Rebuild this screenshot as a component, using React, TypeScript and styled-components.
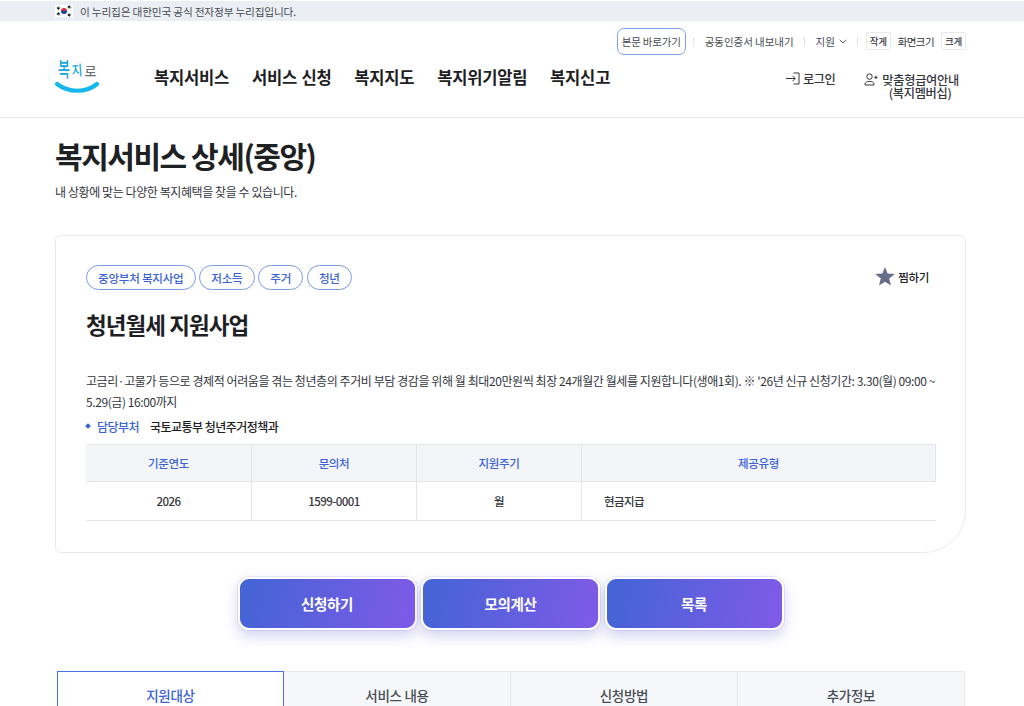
import React from 'react';
import styled, { createGlobalStyle } from 'styled-components';

const Global = createGlobalStyle`
  html, body { margin: 0; padding: 0; background: #fff; }
  body { font-family: "Noto Sans CJK KR", "Noto Sans", sans-serif; color: #1e2124; overflow: hidden; height: 706px; }
  * { box-sizing: border-box; }
`;
const Page = styled.div`width: 1024px; height: 706px; overflow: hidden;`;
const GovBar = styled.div`
  height: 20px; margin-top: 1px; background: #ebeef3; padding-left: 55px;
  display: flex; align-items: center; gap: 7px;
  font-size: 10.7px; letter-spacing: -0.2px; color: #464c53;
`;
const FlagBox = styled.svg`width: 18px; height: 12px; display: block;`;
const Header = styled.header`height: 97px; border-bottom: 1px solid #e6e8ea; padding: 0 58px 0 55px; display: flex; flex-direction: column;`;
const Utility = styled.div`height: 41px; display: flex; justify-content: flex-end; align-items: center; font-size: 10.5px; color: #464c53;`;
const Skip = styled.a`
  width: 69px; height: 27px; border: 1px solid #7f9ff0; border-radius: 7px;
  display: flex; align-items: center; justify-content: center; color: #464c53;
  letter-spacing: -0.2px;
`;
const Sep = styled.i<{ $l?: number; $r?: number }>`
  width: 1px; height: 9px; background: #dfe1e5;
  margin: 0 ${p => p.$r ?? 11}px 0 ${p => p.$l ?? 11}px;
`;
const UtilText = styled.span`display: inline-flex; align-items: center; gap: 4px; letter-spacing: -0.05px;`;
const SizeBtn = styled.button`
  width: 25px; height: 18px; padding: 0; background: #fff; border: 1px solid #e6e8ea; border-radius: 2px;
  font: inherit; font-size: 9.5px; font-weight: 500; color: #33363d; letter-spacing: -0.3px;
`;
const SizeLabel = styled.span`margin: 0 7px; font-size: 10.5px; color: #33363d; letter-spacing: -0.6px;`;
const MainRow = styled.div`display: flex; align-items: flex-start; height: 52px; margin-top: 4px;`;
const LogoBox = styled.div`width: 99px; height: 44px; margin-top: -9px; flex: none;`;
const LogoSvg = styled.svg`width: 48px; height: 44px; display: block; overflow: visible;`;
const LogoWord = styled.text`font-size: 13px; font-weight: 500; font-family: "Noto Sans CJK KR", sans-serif;`;
const Nav = styled.nav`display: flex; gap: 22.8px; font-size: 16.6px; font-weight: 700; color: #1e2124; letter-spacing: -0.25px; word-spacing: 1px; line-height: 24px; margin-top: -1px;`;
const Spacer = styled.div`flex: 1;`;
const LoginItem = styled.div`display: flex; align-items: center; gap: 3px; height: 24px; font-size: 12.2px; font-weight: 500; color: #33363d; letter-spacing: -0.45px; margin-right: 29px; margin-top: 1px;`;
const Member = styled.div`display: flex; flex-direction: column; align-items: center; font-size: 12.2px; font-weight: 500; color: #33363d; line-height: 12px; letter-spacing: -0.25px; margin-top: 8px; margin-right: 7px;`;
const MemberTop = styled.span`display: flex; align-items: center; gap: 4px; height: 12px;`;
const MemberSub = styled.span`margin: 1px 0 0 17px;`;
const Main = styled.main`padding: 0 58px 0 55px;`;
const Title = styled.h1`margin: 15px 0 0; font-size: 30px; font-weight: 700; line-height: 44px; letter-spacing: -1.45px; color: #1e2124;`;
const Sub = styled.p`margin: 5px 0 0; font-size: 12px; line-height: 20px; color: #33363d; letter-spacing: -0.42px;`;
const Card = styled.section`
  margin-top: 33px; height: 318px; border: 1px solid #e9eaec; border-radius: 6px 6px 42px 6px;
  padding: 29px 29px 0 30px; display: flex; flex-direction: column;
`;
const TopRow = styled.div`display: flex; align-items: center; justify-content: space-between; height: 25px;`;
const Tags = styled.div`display: flex; gap: 3.8px;`;
const Tag = styled.span`
  height: 25px; padding: 0 11px; border: 1px solid #7b9ae8; border-radius: 13px; display: flex; align-items: center;
  font-size: 11.6px; font-weight: 500; color: #3b63d6; letter-spacing: -0.27px;
`;
const Fav = styled.button`
  display: flex; align-items: center; gap: 3px; padding: 0; border: 0; background: none; font: inherit;
  font-size: 11.5px; font-weight: 500; color: #1e2124; margin: -2px 7px 0 0; letter-spacing: -0.3px;
`;
const StarSvg = styled.svg`width: 20px; height: 19px; display: block; margin-top: -1px;`;
const CardTitle = styled.h2`margin: 7px 0 0; font-size: 22.5px; line-height: 54px; height: 54px; font-weight: 700; letter-spacing: -0.95px; color: #1e2124;`;
const Desc = styled.p`margin: 19px 0 0; font-size: 12px; line-height: 21px; color: #33363d; letter-spacing: -0.42px;`;
const Owner = styled.div`display: flex; align-items: center; height: 24px; margin-top: 2px; font-size: 12px; font-weight: 500; letter-spacing: -0.53px;`;
const Dot = styled.i`width: 4px; height: 4px; margin-right: 7px; background: #3b63d6; transform: rotate(45deg);`;
const OwnerLabel = styled.span`color: #3b63d6; width: 53px; white-space: nowrap;`;
const OwnerValue = styled.span`color: #1e2124;`;
const Table = styled.div`
  margin-top: 6px; display: grid; grid-template-columns: 166px 165px 165px 1fr; font-size: 11.5px; letter-spacing: -0.35px;
`;
const Th = styled.div`
  height: 38px; background: #f4f5f9; border-top: 1px solid #e9eaee; border-bottom: 1px solid #e4e5ea;
  display: flex; align-items: center; justify-content: center; color: #3b63d6; font-weight: 500;
  &:not(:last-child) { border-right: 1px solid #e4e5ea; }
`;
const Td = styled.div<{ $left?: boolean }>`
  height: 39px; border-bottom: 1px solid #e4e5ea; display: flex; align-items: center;
  justify-content: ${p => (p.$left ? 'flex-start' : 'center')}; padding-left: ${p => (p.$left ? '22px' : '0')};
  color: #33363d; font-weight: 500; letter-spacing: -0.55px;
  &:not(:last-child) { border-right: 1px solid #e4e5ea; }
`;
const Actions = styled.div`margin-top: 24px; display: flex; justify-content: center; gap: 4.5px;`;
const ActionBtn = styled.button`
  width: 179px; height: 53px; border: 2px solid #fff; border-radius: 11px; font: inherit;
  background: linear-gradient(100deg, #4364d5 0%, #7f5ae8 100%);
  box-shadow: 0 6px 14px rgba(96, 90, 200, 0.28), 0 0 0 1px rgba(120, 120, 230, 0.15);
  color: #fff; font-size: 14.5px; font-weight: 700; letter-spacing: -0.3px;
`;
const Tabs = styled.div`margin-top: 41px; margin-left: 2px; margin-right: 1px; display: grid; grid-template-columns: repeat(4, 1fr); height: 60px;`;
const Tab = styled.div<{ $active?: boolean }>`
  display: flex; justify-content: center; padding-top: 13px; font-size: 13.5px; line-height: 20px; font-weight: 500; letter-spacing: -0.3px;
  background: ${p => (p.$active ? '#fff' : '#f6f7fb')};
  color: ${p => (p.$active ? '#3b63d6' : '#464c53')};
  border: 1px solid ${p => (p.$active ? '#4a72e8' : '#e6e8ea')};
  border-left-width: ${p => (p.$active ? '1px' : '0')};
`;

const Flag = () => (
  <FlagBox viewBox="0 0 18 12">
    <rect width="18" height="12" fill="#fff" />
    <path d="M6 6a3 3 0 0 1 6 0z" fill="#cd2e3a" />
    <path d="M6 6a3 3 0 0 0 6 0z" fill="#0047a0" />
    <g stroke="#222" strokeWidth="1.3" strokeDasharray="2 .6">
      <path d="M2 3.5l2.2-2M3 4.4l2.2-2M12.8 1.6l2.2 2M13.8.8l2.2 2M2 8.5l2.2 2M3 7.6l2.2 2M12.8 10.4l2.2-2M13.8 11.2l2.2-2" />
    </g>
  </FlagBox>
);

const Logo = () => (
  <LogoSvg viewBox="0 0 48 44">
    <LogoWord fill="#12a7e0" transform="translate(3 19.5) scale(1 1.6)">복</LogoWord>
    <LogoWord fill="#12a7e0" transform="translate(17 19) rotate(-4) scale(.9 1.1)">지</LogoWord>
    <LogoWord fill="#6b6f76" transform="translate(29.5 19) scale(1 1)">로</LogoWord>
    <path d="M2 27C14 36 31 36 42 27" fill="none" stroke="#14b8ec" strokeWidth="4.2" strokeLinecap="round" />
  </LogoSvg>
);

const Chevron = () => (
  <svg width="8" height="5" viewBox="0 0 8 5" fill="none"><path d="M.7.8 4 4l3.3-3.2" stroke="#5a6068" strokeWidth="1" /></svg>
);
const LoginIcon = () => (
  <svg width="14" height="13" viewBox="0 0 14 13" fill="none" stroke="#33363d" strokeWidth="1">
    <path d="M7.5 1H13v11H7.5" /><path d="M0 6.5h9M6.5 3.8 9.2 6.5 6.5 9.2" />
  </svg>
);
const UserIcon = () => (
  <svg width="14" height="13" viewBox="0 0 14 13" fill="none" stroke="#33363d" strokeWidth="1">
    <circle cx="5.5" cy="3.6" r="2.7" /><path d="M1 12v-.8C1 9.3 3 8.4 5.5 8.4S10 9.3 10 11.2v.8H1Z" /><path d="M10.2 4.4h3.4M11.9 2.7v3.4" />
  </svg>
);
const Star = () => (
  <StarSvg viewBox="0 0 20 19"><path d="M10 0l2.6 6.6 7.2.5-5.6 4.5 1.8 7L10 14.8l-6 3.8 1.8-7L.2 7.1l7.2-.5z" fill="#686d8a" /></StarSvg>
);

export default function App() {
  return (
    <Page>
      <Global />
      <GovBar><Flag /><span>이 누리집은 대한민국 공식 전자정부 누리집입니다.</span></GovBar>
      <Header>
        <Utility>
          <Skip>본문 바로가기</Skip>
          <Sep $l={7} />
          <UtilText>공동인증서 내보내기</UtilText>
          <Sep $l={10} />
          <UtilText>지원<Chevron /></UtilText>
          <Sep $l={10} $r={8} />
          <SizeBtn>작게</SizeBtn>
          <SizeLabel>화면크기</SizeLabel>
          <SizeBtn>크게</SizeBtn>
        </Utility>
        <MainRow>
          <LogoBox><Logo /></LogoBox>
          <Nav>
            <span>복지서비스</span>
            <span>서비스 신청</span>
            <span>복지지도</span>
            <span>복지위기알림</span>
            <span>복지신고</span>
          </Nav>
          <Spacer />
          <LoginItem><LoginIcon />로그인</LoginItem>
          <Member>
            <MemberTop><UserIcon />맞춤형급여안내</MemberTop>
            <MemberSub>(복지멤버십)</MemberSub>
          </Member>
        </MainRow>
      </Header>
      <Main>
        <Title>복지서비스 상세(중앙)</Title>
        <Sub>내 상황에 맞는 다양한 복지혜택을 찾을 수 있습니다.</Sub>
        <Card>
          <TopRow>
            <Tags>
              <Tag>중앙부처 복지사업</Tag>
              <Tag>저소득</Tag>
              <Tag>주거</Tag>
              <Tag>청년</Tag>
            </Tags>
            <Fav><Star />찜하기</Fav>
          </TopRow>
          <CardTitle>청년월세 지원사업</CardTitle>
          <Desc>고금리·고물가 등으로 경제적 어려움을 겪는 청년층의 주거비 부담 경감을 위해 월 최대20만원씩 최장 24개월간 월세를 지원합니다(생애1회). ※ '26년 신규 신청기간: 3.30(월) 09:00 ~ 5.29(금) 16:00까지</Desc>
          <Owner>
            <Dot />
            <OwnerLabel>담당부처</OwnerLabel>
            <OwnerValue>국토교통부 청년주거정책과</OwnerValue>
          </Owner>
          <Table>
            <Th>기준연도</Th>
            <Th>문의처</Th>
            <Th>지원주기</Th>
            <Th>제공유형</Th>
            <Td>2026</Td>
            <Td>1599-0001</Td>
            <Td>월</Td>
            <Td $left>현금지급</Td>
          </Table>
        </Card>
        <Actions>
          <ActionBtn>신청하기</ActionBtn>
          <ActionBtn>모의계산</ActionBtn>
          <ActionBtn>목록</ActionBtn>
        </Actions>
        <Tabs>
          <Tab $active>지원대상</Tab>
          <Tab>서비스 내용</Tab>
          <Tab>신청방법</Tab>
          <Tab>추가정보</Tab>
        </Tabs>
      </Main>
    </Page>
  );
}
